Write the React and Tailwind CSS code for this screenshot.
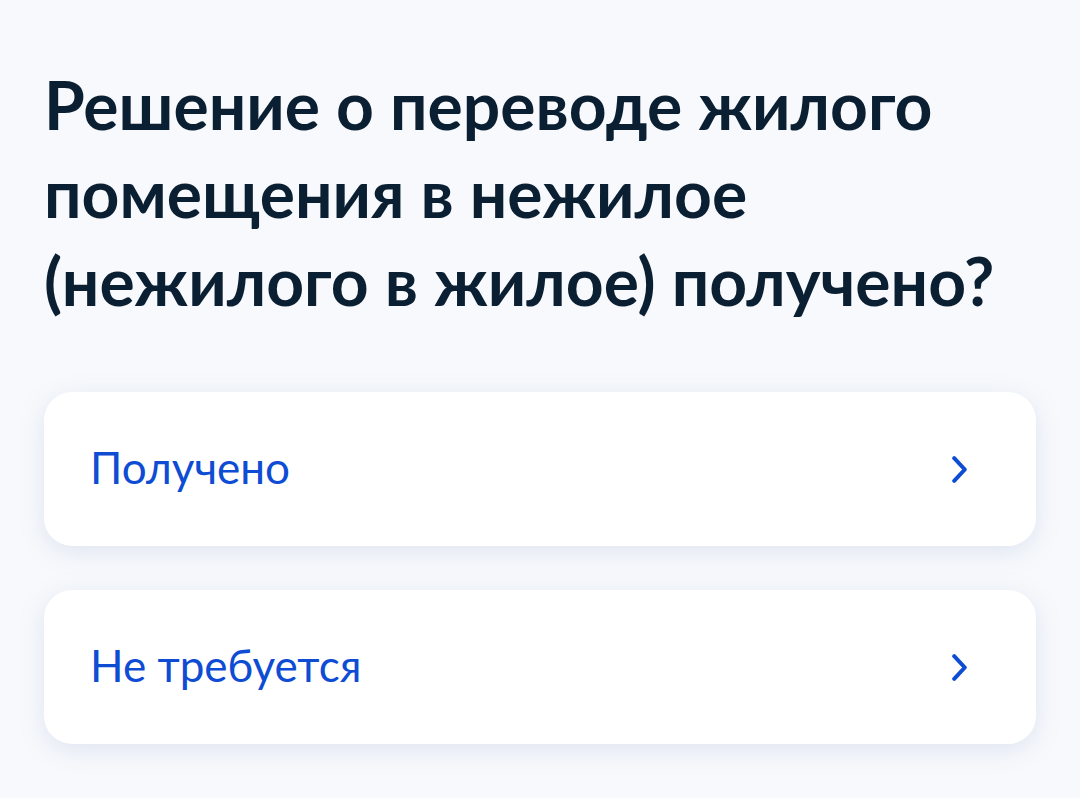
import React from "react";

function Option({ label }) {
  return (
    <button className="flex h-[154px] w-full items-center justify-between rounded-[28px] bg-white pl-[46px] pr-[69px] text-left shadow-[0_6px_24px_rgba(140,160,200,0.22)]">
      <span className="pb-[4px] text-[44px] leading-none text-[#0d4cd3]">{label}</span>
      <svg width="15" height="27" viewBox="0 0 15 27" fill="none">
        <path d="M2.2 2.2l10.6 11.3L2.2 24.8" stroke="#0d4cd3" strokeWidth="4" strokeLinecap="round" strokeLinejoin="round" />
      </svg>
    </button>
  );
}

export default function App() {
  return (
    <div className="min-h-[798px] w-full bg-[#f7f9fc] px-[44px] pt-[61px]" style={{ fontFamily: "Lato, 'Noto Sans', sans-serif" }}>
      <h1 className="whitespace-nowrap text-[66px] font-bold leading-[88px] text-[#0b1f33]">
        Решение о переводе жилого
        <br />
        помещения в нежилое
        <br />
        (нежилого в жилое) получено?
      </h1>
      <div className="mt-[67px] flex flex-col gap-[44px]">
        <Option label="Получено" />
        <Option label="Не требуется" />
      </div>
    </div>
  );
}
